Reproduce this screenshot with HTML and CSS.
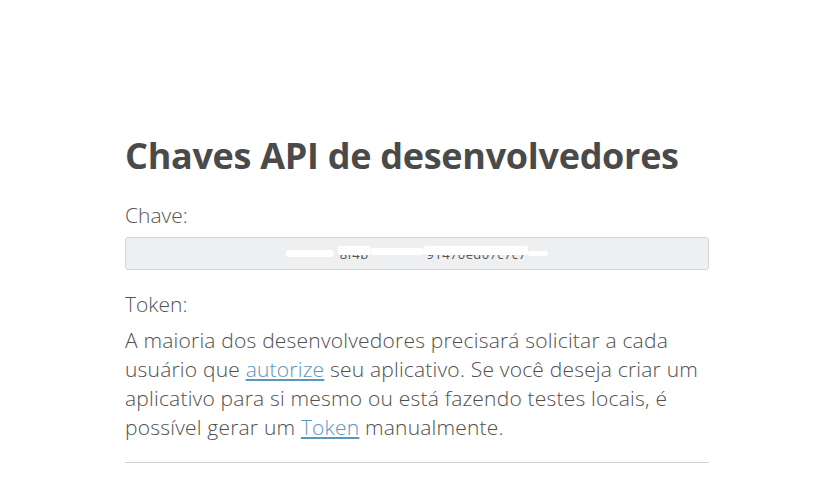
FILE: index.html
```html
<!DOCTYPE html>
<html lang="pt">
<head>
<meta charset="utf-8">
<title>Chaves API de desenvolvedores</title>
<link rel="stylesheet" href="styles.css">
</head>
<body>
<main class="page">
  <h1 class="title">Chaves API de desenvolvedores</h1>
  <label class="label">Chave:</label>
  <div class="key-field">
    <span class="key-text"><span class="mask m1"></span><span class="frag">8f4b</span><span class="mask m2"></span><span class="frag">91470ed07c7c7</span><span class="mask m3"></span></span>
  </div>
  <label class="label token-label">Token:</label>
  <p class="desc">A maioria dos desenvolvedores precisará solicitar a cada usuário que <a href="#">autorize</a> seu aplicativo. Se você deseja criar um aplicativo para si mesmo ou está fazendo testes locais, é possível gerar um <a href="#">Token</a> manualmente.</p>
  <hr class="rule">
</main>
</body>
</html>
```

FILE: styles.css
```css
html, body {
  margin: 0;
  padding: 0;
  background: #fff;
}
body {
  font-family: "Open Sans", "Liberation Sans", sans-serif;
  color: #555;
}
.page {
  width: 584px;
  margin-left: 125px;
  padding-top: 129px;
}
.title {
  margin: 0;
  font-size: 36px;
  line-height: 54px;
  font-weight: 700;
  color: #4a4a4a;
  letter-spacing: -0.3px;
}
.label {
  display: block;
  font-size: 21px;
  line-height: 28px;
  font-weight: 300;
  color: #555;
  margin-top: 18px;
}
.key-field {
  margin-top: 8px;
  height: 31px;
  border: 1px solid #d3d4d6;
  border-radius: 3px;
  background: #eeeff1;
  display: flex;
  align-items: center;
  justify-content: center;
}
.key-text {
  display: flex;
  align-items: center;
  font-size: 13px;
  line-height: 16px;
  color: #555;
  letter-spacing: 0.4px;
}
.frag {
  position: relative;
}
.frag::after {
  content: "";
  position: absolute;
  left: -2px;
  right: -2px;
  top: 0;
  height: 9px;
  background: #fff;
  border-radius: 2px;
}
.mask {
  display: inline-block;
  background: #fff;
  height: 7px;
  border-radius: 3px;
}
.m1 { width: 48px; margin-right: 6px; }
.m2 { width: 54px; margin: 0 2px 4px; }
.m3 { width: 20px; margin-left: 2px; height: 5px; }
.token-label {
  margin-top: 20px;
}
.desc {
  margin: 8px 0 0;
  font-size: 21px;
  line-height: 29px;
  font-weight: 300;
  color: #505050;
  letter-spacing: 0.2px;
}
.desc a {
  color: #5b96bd;
  text-decoration: underline;
}
.rule {
  margin: 20px 0 0;
  border: 0;
  border-top: 1px solid #d0d0d0;
}
```
